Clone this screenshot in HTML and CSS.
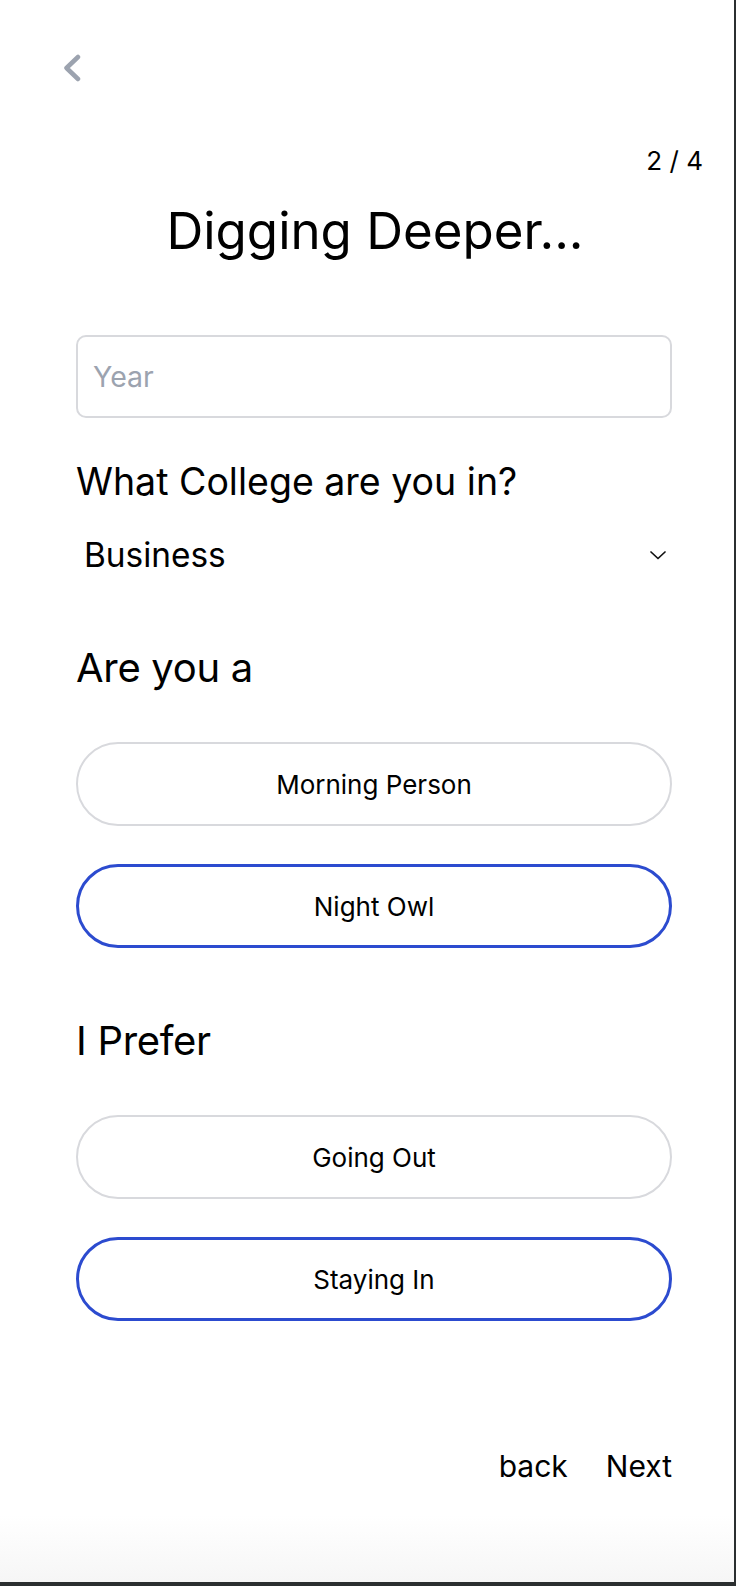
FILE: index.html
```html
<!DOCTYPE html>
<html lang="en">
<head>
    <meta charset="UTF-8">
    <meta name="viewport" content="width=device-width, initial-scale=1.0">
    <link rel="stylesheet" href="styles.css">
    <title>Digging Deeper</title>
</head>
<body>
    <div class="screen">
        <div class="topbar">
            <a class="back-arrow" href="#">
                <svg width="20" height="28" viewBox="0 0 20 28">
                    <path d="M16 3 L4.5 14 L16 25" fill="none" stroke="#9ca3af" stroke-width="4.5" stroke-linecap="round" stroke-linejoin="round"/>
                </svg>
            </a>
        </div>
        <div class="step">2 / 4</div>
        <h1 class="title">Digging Deeper...</h1>

        <div class="form">
            <input class="text-input" type="text" placeholder="Year">

            <label class="label">What College are you in?</label>
            <div class="select">
                <span>Business</span>
                <svg width="18" height="12" viewBox="0 0 18 12">
                    <path d="M2 3 L9 9.5 L16 3" fill="none" stroke="#111" stroke-width="1.7" stroke-linecap="round" stroke-linejoin="round"/>
                </svg>
            </div>

            <h2 class="question">Are you a</h2>
            <div class="options">
                <button class="option">Morning Person</button>
                <button class="option selected">Night Owl</button>
            </div>

            <h2 class="question">I Prefer</h2>
            <div class="options">
                <button class="option">Going Out</button>
                <button class="option selected">Staying In</button>
            </div>

            <div class="nav">
                <a href="#">back</a>
                <a href="#">Next</a>
            </div>
        </div>
    </div>
</body>
</html>
```

FILE: styles.css
```css
body {
    margin: 0;
    background-color: #2b2f30;
    font-family: 'Inter', 'Noto Sans', sans-serif;
    color: #000;
}

.screen {
    width: 734px;
    height: 1582px;
    background: linear-gradient(to bottom, #fff 0, #fff 1515px, #f6f6f6 1582px);
    box-sizing: border-box;
}

.topbar {
    padding: 54px 0 0 62px;
    height: 28px;
}

.back-arrow {
    display: block;
    width: 20px;
    height: 28px;
}

.back-arrow svg {
    display: block;
}

.step {
    margin-top: 65px;
    padding-right: 31px;
    text-align: right;
    font-size: 26px;
    line-height: 28px;
}

.title {
    margin: 25px 0 0 0;
    padding-left: 16px;
    text-align: center;
    font-size: 51px;
    line-height: 62px;
    font-weight: 400;
}

.form {
    padding: 0 62px 0 76px;
    display: flex;
    flex-direction: column;
}

.text-input {
    margin-top: 73px;
    height: 83px;
    box-sizing: border-box;
    border: 2px solid #d8d9dd;
    border-radius: 10px;
    padding: 0 15px;
    font-family: inherit;
    font-size: 28.5px;
    outline: none;
}

.text-input::placeholder {
    color: #9ca3af;
}

.label {
    margin-top: 41px;
    font-size: 37.5px;
    line-height: 46px;
}

.select {
    margin-top: 30px;
    padding: 0 5px 0 8px;
    height: 40px;
    display: flex;
    align-items: center;
    justify-content: space-between;
    font-size: 33.4px;
    line-height: 40px;
}

.question {
    margin: 69px 0 0 0;
    font-size: 40px;
    line-height: 48px;
    font-weight: 400;
    letter-spacing: -0.3px;
}

.options {
    margin-top: 50px;
    display: flex;
    flex-direction: column;
    gap: 38px;
}

.option {
    height: 84px;
    border: 2px solid #d8d9dd;
    border-radius: 42px;
    background: #fff;
    font-family: inherit;
    font-size: 26px;
    color: #000;
}

.option.selected {
    border: 3px solid #2c4bcf;
}

.nav {
    margin-top: 127px;
    display: flex;
    justify-content: flex-end;
    gap: 38px;
    font-size: 30px;
    line-height: 36px;
}

.nav a {
    color: #000;
    text-decoration: none;
}
```
